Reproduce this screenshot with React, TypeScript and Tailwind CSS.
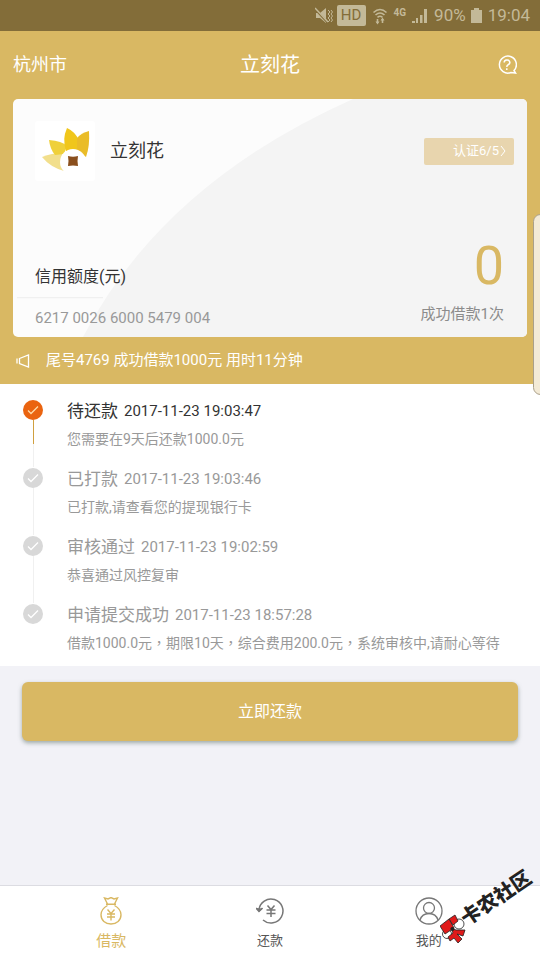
import type { ReactNode } from "react"

const records = [
  { title: "待还款", time: "2017-11-23 19:03:47", note: "您需要在9天后还款1000.0元" },
  { title: "已打款", time: "2017-11-23 19:03:46", note: "已打款,请查看您的提现银行卡" },
  { title: "审核通过", time: "2017-11-23 19:02:59", note: "恭喜通过风控复审" },
  {
    title: "申请提交成功",
    time: "2017-11-23 18:57:28",
    note: "借款1000.0元，期限10天，综合费用200.0元，系统审核中,请耐心等待"
  }
]

export default function App() {
  return (
    <div className="relative flex min-h-screen flex-col overflow-hidden bg-[#f2f2f7] font-['Roboto','Noto_Sans_CJK_SC',sans-serif]">
      <StatusBar />

      <div className="bg-[#d9b863]">
        <header className="grid h-[68px] grid-cols-3 items-center px-[13px] text-white">
          <button className="justify-self-start text-lg">杭州市</button>
          <h1 className="text-center text-xl">立刻花</h1>
          <button aria-label="帮助" className="mr-[10px] justify-self-end">
            <HelpIcon />
          </button>
        </header>
        <CreditCard />
        <div className="flex h-[47px] items-center gap-4 px-4 text-[15px] text-white">
          <SpeakerIcon />
          <p>尾号4769 成功借款1000元 用时11分钟</p>
        </div>
      </div>

      <ol className="bg-white pt-[15px]">
        {records.map((record, index) => (
          <Record key={record.time} {...record} active={index === 0} last={index === records.length - 1} />
        ))}
      </ol>

      <button className="mx-[22px] mt-4 h-[59px] rounded-md bg-[#d9b863] text-base text-white shadow-[0_2px_4px_rgba(90,110,100,0.55)]">
        立即还款
      </button>

      <nav className="mt-auto grid h-[75px] grid-cols-3 border-t border-[#dcdce2] bg-white px-8 text-[#555]">
        <Tab label="借款" active>
          <BagIcon />
        </Tab>
        <Tab label="还款">
          <RepayIcon />
        </Tab>
        <Tab label="我的">
          <UserIcon />
        </Tab>
      </nav>

      {/* Edge panel handle */}
      <div className="absolute top-[214px] -right-2 h-[181px] w-[15px] rounded-lg border border-[#aaa08a] bg-[#f3ead6]" />

      <Watermark />
    </div>
  )
}

function StatusBar() {
  return (
    <div className="flex h-[31px] items-center justify-end bg-[#836d39] pr-[10px] text-[17px] text-[#c3b998]">
      <svg width="18" height="18" viewBox="0 0 18 18" fill="none" stroke="currentColor" strokeWidth="1.5">
        <path d="M1 6h4l6-5v15l-6-5H1z" fill="currentColor" stroke="none" />
        <path d="M0 2l13 14" stroke="#836d39" strokeWidth="2" />
        <path d="M0 1l13 14" />
        <path d="M13 3l2 2-2 2 2 2-2 2 2 2-2 2M16 3l1.500 2-1.500 2 1.500 2-1.500 2 1.500 2-1.500 2" strokeWidth="1" />
      </svg>
      <span className="ml-1 flex h-[21px] w-[29px] items-center justify-center rounded-xs bg-[#c3b998] text-[15px] text-[#836d39]">
        HD
      </span>
      <svg className="ml-[6px]" width="16" height="18" viewBox="0 0 16 18" fill="none" stroke="currentColor" strokeWidth="1.600">
        <path d="M1.500 5.500q6.500-6 13 0M3.500 8q4.500-4 9 0M5.500 10.300q2.500-2 5 0" />
        <path d="M5.500 12v4M10.500 12v4" />
        <path d="M3.500 14.500h4l-2 3zM8.500 13.500h4l-2-3z" fill="currentColor" stroke="none" />
      </svg>
      <span className="ml-[6px] self-start pt-[7px] text-[10px] leading-3 font-bold">4G</span>
      <svg className="ml-[6px]" width="16" height="16" viewBox="0 0 16 16" fill="currentColor">
        <path d="M0 13h3v2H0zM4 10h2v5H4zM8 7h2.500v8H8zM12 1h3v14h-3z" />
      </svg>
      <span className="ml-[6px]">90%</span>
      <svg className="ml-[5px]" width="11" height="15" viewBox="0 0 11 15" fill="currentColor">
        <path d="M3 0h5v2h3v13H0V2h3z" />
      </svg>
      <span className="ml-[6px]">19:04</span>
    </div>
  )
}

function CreditCard() {
  return (
    <section className="relative mx-[13px] flex h-[238px] flex-col justify-between overflow-hidden rounded-[5px] bg-[#fcfcfc]">
      <svg className="absolute inset-0 h-full w-full" viewBox="0 0 514 239" preserveAspectRatio="none">
        <path d="M70 239Q150 85 340 0H514V239Z" fill="#f4f4f4" />
        <path d="M4 199.500H90" stroke="#eee" />
      </svg>

      <div className="relative flex items-center pt-[22px] pr-[13px] pl-[22px]">
        <SunLogo />
        <h2 className="ml-[15px] text-lg text-[#333]">立刻花</h2>
        <button className="ml-auto flex h-[27px] w-[90px] items-center justify-end gap-px rounded-xs bg-[#e8d5ae] pr-2 text-[13px] text-white">
          认证6/5
          <svg width="6" height="12" viewBox="0 0 6 12" fill="none" stroke="currentColor">
            <path d="M1 1l4 5-4 5" />
          </svg>
        </button>
      </div>

      <div className="relative flex items-end justify-between pr-[23px] pb-2 pl-[22px]">
        <div>
          <p className="text-base text-[#333]">信用额度(元)</p>
          <p className="mt-[18px] text-[15px] leading-[22px] text-[#999]">6217 0026 6000 5479 004</p>
        </div>
        <div className="pb-1 text-right">
          <p className="text-[54px] leading-[66px] text-[#d9b863]">0</p>
          <p className="mt-1 text-[15px] leading-[22px] text-[#8c8c8c]">成功借款1次</p>
        </div>
      </div>
    </section>
  )
}

type RecordProps = { title: string; time: string; note: string; active: boolean; last: boolean }

function Record({ title, time, note, active, last }: RecordProps) {
  return (
    <li className="flex gap-6 pl-[23px]">
      <div className="flex w-5 flex-col items-center pt-px">
        <svg width="20" height="20" viewBox="0 0 20 20" fill="none">
          <circle cx="10" cy="10" r="10" fill={active ? "#ea6410" : "#d8d8d8"} />
          <path d="M5 10.500l3 3 7-7" stroke={active ? "#ffdca8" : "#fff"} strokeWidth="1.300" />
        </svg>
        {active && <div className="h-6 w-px bg-[#d0a040]" />}
        {!last && <div className="w-px flex-1 bg-[#f0f0f0]" />}
      </div>
      <div className={last ? "pb-[11px]" : "pb-4"}>
        <p className={active ? "flex items-center gap-[6px] text-[#333]" : "flex items-center gap-[6px] text-[#999]"}>
          <span className="text-[17px] leading-6">{title}</span>
          <time className="text-[15px] leading-6">{time}</time>
        </p>
        {/* TC face: its full-width comma sits in the middle of the cell */}
        <p className="mt-1 font-['Roboto','Noto_Sans_CJK_TC',sans-serif] text-sm leading-6 text-[#999]">{note}</p>
      </div>
    </li>
  )
}

function Tab({ label, active, children }: { label: string; active?: boolean; children: ReactNode }) {
  return (
    <a
      href="#"
      className={
        active
          ? "flex flex-col items-center gap-1 pt-[11px] text-[15px] leading-6 text-[#d9b863]"
          : "flex flex-col items-center gap-1 pt-[11px] text-[13px] leading-6"
      }
    >
      {children}
      {label}
    </a>
  )
}

function HelpIcon() {
  return (
    <svg width="20" height="20" viewBox="0 0 20 20" fill="none" stroke="currentColor" strokeWidth="1.500">
      <path d="M17 15.500A8.500 8.500 0 1 0 14 17.500l4.500.500z" />
      <path d="M7.200 7.500a2.800 2.500 0 1 1 4 2.200q-1.400.800-1.400 2.300M9.800 13.300v1.700" />
    </svg>
  )
}

function SpeakerIcon() {
  return (
    <svg width="14" height="14" viewBox="0 0 14 14" fill="none" stroke="currentColor" strokeWidth="1.300">
      <path d="M1 4.500v5M3.500 4.500L12.500 1v12L3.500 9.500z" />
    </svg>
  )
}

function SunLogo() {
  return (
    <svg width="60" height="60" viewBox="0 0 60 60">
      <rect width="60" height="60" rx="3" fill="#fff" />
      <path d="M7 36q10-4 20-4l2 18q-14-4-22-14z" fill="#f2df8c" />
      <path d="M14 19q13 1 18 6l-3 8-9 1q-5-6-6-15z" fill="#efd03a" />
      <path d="M32 7q9 4 12 13v10H31q-4-12 1-23z" fill="#f0c61b" />
      <path d="M54 10q1 15-3 26l-9-7v-12q4-5 12-7z" fill="#eabc28" />
      <circle cx="38" cy="41" r="13" fill="#fff" />
      <path d="M33 35q5 1.500 10 0-1 5 0 10-5-1-10 0 1-5 0-10z" fill="#8a4f1d" />
    </svg>
  )
}

function BagIcon() {
  return (
    <svg width="28" height="28" viewBox="0 0 28 28" fill="none" stroke="currentColor" strokeWidth="1.400">
      <path d="M10.500 7L7.500 1l3.500 1 3-1.500L17 2l3.500-1-3 6M9 7.300h10" />
      <path d="M10.500 8.500C6 11 4 14 4 17.800c0 5.500 4.300 9.200 10 9.200s10-3.700 10-9.200c0-3.800-2-6.800-6.500-9.300" />
      <path d="M10.500 12.500l3.500 4 3.500-4M14 16.500v7M10 17h8M10 20h8" />
    </svg>
  )
}

function RepayIcon() {
  return (
    <svg width="28" height="28" viewBox="0 0 28 28" fill="none" stroke="#777" strokeWidth="1.500">
      <path d="M3 13A12 12 0 1 1 7 23" />
      <path d="M.500 11l2.500 4 4-3.500z" fill="#777" stroke="none" />
      <path d="M0 11l3 3.500 3.500-3.500" />
      <path d="M11.500 8.500l3.500 4 3.500-4M15 12.500v7.500M10.500 13h9M10.500 16.500h9" />
    </svg>
  )
}

function UserIcon() {
  return (
    <svg width="28" height="28" viewBox="0 0 28 28" fill="none" stroke="#777" strokeWidth="1.300">
      <circle cx="14" cy="14" r="13" />
      <circle cx="14" cy="11" r="5.500" />
      <path d="M5 23q2-6.500 9-6.500t9 6.500" />
    </svg>
  )
}

function Watermark() {
  return (
    <div className="pointer-events-none absolute right-0 bottom-4 h-[80px] w-[100px]">
      <svg className="absolute bottom-0 left-0" width="28" height="30" viewBox="0 0 28 30" stroke="#222" strokeWidth="0.800">
        <circle cx="7" cy="20" r="4.500" fill="#fff" />
        <circle cx="19" cy="10" r="5" fill="#fff" />
        <path d="M9 5l6-4 3 6-5 4z" fill="#e01a1a" />
        <path d="M0 12l9-7 5 9-9 6z" fill="#e01a1a" />
        <path d="M11 14l5 2 9 0-2 6-6-2 5 5-4 4-4-5-4 3-2-4 5-4z" fill="#e01a1a" />
        <circle cx="12.500" cy="15" r="2" fill="#222" stroke="none" />
      </svg>
      <span className="absolute top-[22px] left-[16px] -rotate-[34deg] text-xl leading-6 font-black whitespace-nowrap text-[#222]">
        卡农社区
      </span>
    </div>
  )
}
